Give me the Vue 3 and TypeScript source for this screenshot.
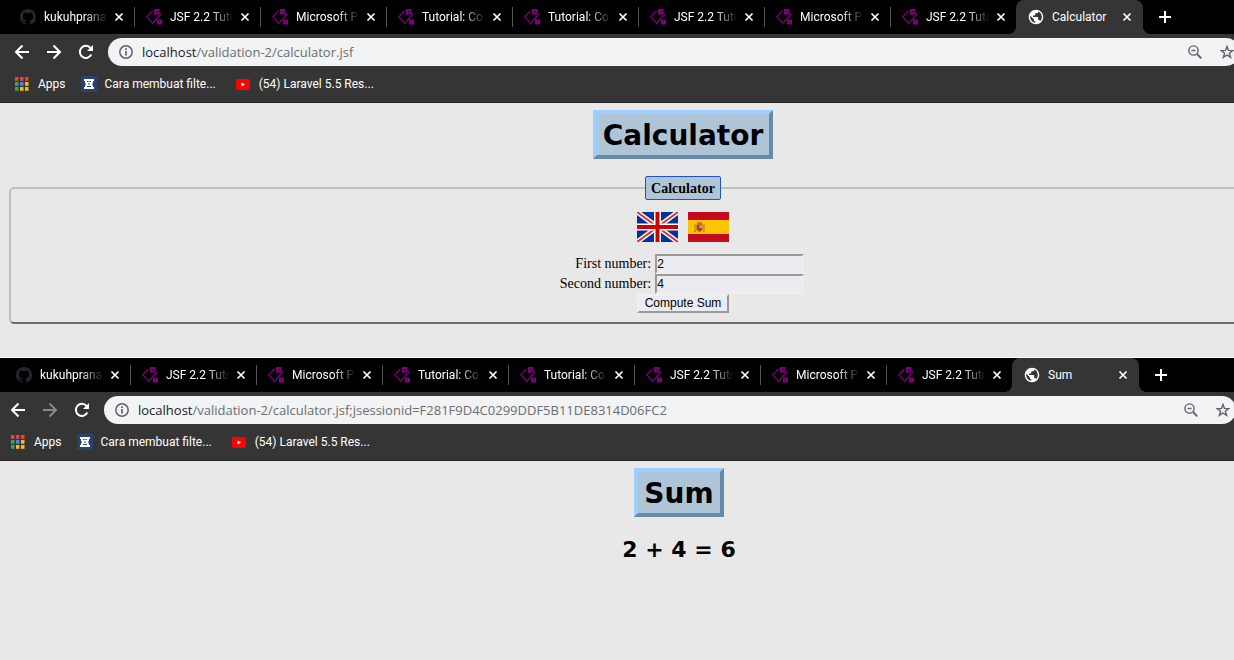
<script setup lang="ts">
interface Tab { title: string; icon: 'github' | 'code' | 'globe'; active?: boolean }
interface BrowserWindow { id: string; name: string; rest: string; forward: boolean; tabs: Tab[] }

const openTabs: Tab[] = [
  { title: 'kukuhprana', icon: 'github' },
  { title: 'JSF 2.2 Tuto', icon: 'code' },
  { title: 'Microsoft P', icon: 'code' },
  { title: 'Tutorial: Co', icon: 'code' },
  { title: 'Tutorial: Co', icon: 'code' },
  { title: 'JSF 2.2 Tuto', icon: 'code' },
  { title: 'Microsoft P', icon: 'code' },
  { title: 'JSF 2.2 Tuto', icon: 'code' },
]

const windows: BrowserWindow[] = [
  {
    id: 'calculator', name: 'Calculator', rest: '/validation-2/calculator.jsf', forward: true,
    tabs: [...openTabs, { title: 'Calculator', icon: 'globe', active: true }],
  },
  {
    id: 'sum', name: 'Sum', rest: '/validation-2/calculator.jsf;jsessionid=F281F9D4C0299DDF5B11DE8314D06FC2', forward: false,
    tabs: [...openTabs, { title: 'Sum', icon: 'globe', active: true }],
  },
]

const appColors = ['#ea4335', '#ea4335', '#ea4335', '#34a853', '#4285f4', '#fbbc05', '#34a853', '#fbbc05', '#fbbc05']
</script>

<template>
  <div class="stack">
    <section v-for="w in windows" :key="w.id" class="window" :class="w.id">
      <div class="tabs">
        <div v-for="(t, i) in w.tabs" :key="i" class="tab" :class="{ active: t.active }">
          <svg v-if="t.icon === 'github'" class="fav" viewBox="0 0 16 16" fill="#24292e">
            <path d="M8 0C3.58 0 0 3.58 0 8c0 3.54 2.29 6.53 5.47 7.59.4.07.55-.17.55-.38v-1.49c-2.01.37-2.53-.49-2.69-.94-.09-.23-.48-.94-.82-1.13-.28-.15-.68-.52-.01-.53.63-.01 1.08.58 1.23.82.72 1.21 1.87.87 2.33.66.07-.52.28-.87.51-1.07-1.78-.2-3.64-.89-3.64-3.95 0-.87.31-1.59.82-2.15-.08-.2-.36-1.02.08-2.12 0 0 .67-.21 2.2.82a7.4 7.4 0 0 1 4 0c1.53-1.04 2.2-.82 2.2-.82.44 1.1.16 1.92.08 2.12.51.56.82 1.27.82 2.15 0 3.07-1.87 3.75-3.65 3.95.29.25.54.73.54 1.48v2.2c0 .21.15.46.55.38A8 8 0 0 0 16 8c0-4.42-3.58-8-8-8z" />
          </svg>
          <svg v-else-if="t.icon === 'code'" class="fav" viewBox="0 0 16 16" fill="none" stroke="#800080">
            <path d="M6.500 2L.8 7.800 6 13.500M15.500 4.500L6 15" stroke-width="1.200" />
            <path d="M9 1h3.500v3.500H9zM12 11.500h3v3h-3z" stroke-width="2" />
          </svg>
          <svg v-else class="fav" viewBox="1 1 22 22">
            <path fill="#fff" d="M12 2C6.480 2 2 6.480 2 12s4.480 10 10 10 10-4.480 10-10S17.520 2 12 2zm-1 17.930c-3.950-.49-7-3.850-7-7.930 0-.62.08-1.210.21-1.790L9 15v1c0 1.100.9 2 2 2v1.930zm6.900-2.540c-.26-.81-1-1.390-1.900-1.390h-1v-3c0-.55-.45-1-1-1H8v-2h2c.55 0 1-.45 1-1V7h2c1.100 0 2-.9 2-2v-.41c2.930 1.190 5 4.060 5 7.410 0 2.080-.8 3.970-2.100 5.390z" />
          </svg>
          <span class="title">{{ t.title }}</span>
          <button class="close" aria-label="Close tab">
            <svg viewBox="0 0 10 10"><path d="M1.500 1.500l7 7M8.500 1.500l-7 7" stroke="#fff" stroke-width="1.700" /></svg>
          </button>
        </div>
        <button class="plus" aria-label="New tab">
          <svg viewBox="0 0 12 12"><path d="M6 0v12M0 6h12" stroke="#fff" stroke-width="2" /></svg>
        </button>
      </div>

      <div class="toolbar">
        <button class="nav" aria-label="Back">
          <svg viewBox="0 0 16 16"><path d="M15 8H2M8.500 1.500L2 8l6.500 6.500" /></svg>
        </button>
        <button class="nav" :class="{ dim: !w.forward }" aria-label="Forward">
          <svg viewBox="0 0 16 16"><path d="M1 8h13M7.500 1.500L14 8l-6.500 6.500" /></svg>
        </button>
        <button class="nav" aria-label="Reload">
          <svg viewBox="0 0 16 16"><path d="M13.300 10.500A6 6 0 1 1 12.500 4" /><path class="solid" d="M15 1v6H9z" /></svg>
        </button>
        <div class="address">
          <svg class="info" viewBox="0 0 14 14"><circle cx="7" cy="7" r="6.200" fill="none" stroke="#5f6368" stroke-width="1.500" /><path d="M7 6v4.500M7 3.300v1.700" stroke="#5f6368" stroke-width="1.700" /></svg>
          <span class="url"><b>localhost</b>{{ w.rest }}</span>
          <svg class="lens" viewBox="0 0 14 14" fill="none" stroke="#5f6368" stroke-width="1.400"><circle cx="5.500" cy="5.500" r="4.600" /><path d="M9 9l4.300 4.300" stroke-width="1.800" /><path d="M3.500 5.500h4" /></svg>
          <svg class="star" viewBox="0 0 14 14" fill="none" stroke="#5f6368" stroke-width="1.400"><path d="M7 1.500l1.500 3.900 4.200.2-3.300 2.600 1.200 4.100L7 10l-3.600 2.300 1.200-4.100L1.300 5.600l4.200-.2z" /></svg>
        </div>
      </div>

      <nav class="bookmarks">
        <a href="#" class="bookmark">
          <svg class="apps" viewBox="0 0 14 14">
            <rect v-for="(c, i) in appColors" :key="i" :x="(i % 3) * 5" :y="Math.floor(i / 3) * 5" width="3.500" height="3.800" :fill="c" />
          </svg>Apps
        </a>
        <a href="#" class="bookmark filter">
          <svg class="book" viewBox="0 0 16 16"><path fill="#2b4170" d="M0 0h16v16H0z" /><path fill="#fff" d="M3 3h10v2h-1v2l-1 1 1 2v1h1v2H3v-2h1v-1l1-2-1-1V5H3z" /><path d="M6 5.500h1.500M8.500 5.500H10M6 10.500h4M7 8h2" stroke="#2b4170" /></svg>Cara membuat filte...
        </a>
        <a href="#" class="bookmark video">
          <svg class="tube" viewBox="0 0 14 11"><rect width="14" height="11" rx="2" fill="#f00" /><path d="M5.500 3.500v4L9 5.500z" fill="#fff" /></svg>(54) Laravel 5.5 Res...
        </a>
      </nav>

      <main class="page">
        <h1>{{ w.name }}</h1>
        <form v-if="w.id === 'calculator'" @submit.prevent>
          <fieldset>
            <legend>Calculator</legend>
            <div class="flags">
              <a href="#" aria-label="English">
                <svg viewBox="0 0 41 30">
                  <path fill="#039" d="M0 0h41v30H0z" />
                  <path d="M0 0l41 30M41 0L0 30" stroke="#fff" stroke-width="5" />
                  <path d="M0 0l41 30M41 0L0 30" stroke="#d33" stroke-width="2" />
                  <path d="M20.500 0v30M0 15h41" stroke="#fff" stroke-width="7" />
                  <path d="M20.500 0v30M0 15h41" stroke="#c00" stroke-width="4" />
                </svg>
              </a>
              <a href="#" aria-label="Español">
                <svg viewBox="0 0 41 30">
                  <path fill="#c60b1e" d="M0 0h41v30H0z" /><path fill="#ffc400" d="M0 8h41v14H0z" />
                  <path fill="#b5762a" d="M9.500 10h4l1 3h-6zM6.500 12h1v8h-1zM15.500 12h1v8h-1zM6 19h2v1H6zM15 19h2v1h-2z" />
                  <path fill="#a8452f" d="M8.500 13h6v5l-3 2-3-2z" /><path fill="#c9a59b" d="M11.500 13.500h2.500V16h-2.500z" />
                </svg>
              </a>
            </div>
            <div class="fields">
              <label for="first">First number:</label><input id="first" type="text" value="2">
              <label for="second">Second number:</label><input id="second" type="text" value="4">
            </div>
            <button class="compute" type="submit">Compute Sum</button>
          </fieldset>
        </form>
        <h2 v-else>2 + 4 = 6</h2>
      </main>
    </section>
  </div>
</template>

<style>
body { margin: 0; background: #e8e8e8; }
</style>

<style scoped>
.stack { overflow: hidden; background: #e8e8e8; min-height: 100vh; }
.window { width: calc(100% + 132px); }
.window.calculator { border-bottom: 1px solid #fff; }
.window.sum { margin-left: -4px; }
button { border: 0; padding: 0; background: none; }
svg { display: block; flex: none; }
.tabs { display: flex; height: 34px; padding-left: 8px; background: #000; font: 12px/16px Roboto, sans-serif; color: #fff; }
.tab { box-sizing: border-box; width: 126px; display: flex; align-items: center; padding: 0 10px 0 12px; position: relative; }
.tab::after { content: ""; position: absolute; right: -1px; top: 7px; height: 20px; width: 1px; background: #555; }
.tab:nth-child(8)::after { display: none; }
.tab.active { background: #353535; border-radius: 8px 8px 0 0; width: 127px; padding-right: 11px; }
.tab.active::before, .tab.active::after { content: ""; display: block; position: absolute; top: auto; bottom: 0; width: 8px; height: 8px; }
.tab.active::before { left: -8px; background: radial-gradient(circle at 0 0, transparent 8px, #353535 8px); }
.tab.active::after { right: -8px; background: radial-gradient(circle at 100% 0, transparent 8px, #353535 8px); }
.fav { width: 16px; height: 16px; }
.title { flex: 1; margin-left: 8px; margin-right: 3px; white-space: nowrap; }
.tab:not(.active) .title { mask-image: linear-gradient(to right, #000 60%, transparent 95%); }
.close svg { width: 10px; height: 10px; }
.plus { margin-left: 16px; }
.plus svg { width: 12px; height: 12px; }
.toolbar { display: flex; align-items: center; gap: 16px; height: 36px; padding: 0 126px 0 14px; background: #353535; }
.nav svg { width: 16px; height: 16px; fill: none; stroke: #fff; stroke-width: 2; }
.nav .solid { fill: #fff; stroke: none; }
.nav.dim svg { stroke: #888; }
.address { flex: 1; display: flex; align-items: center; height: 28px; margin-left: -2px; padding: 0 6px 0 11px; border-radius: 14px; background: #f1f3f4; font: 13px/20px "Open Sans", sans-serif; color: #6a6e72; }
.address b { font-weight: 400; color: #202124; }
.info { width: 14px; height: 14px; margin-right: 9px; }
.url { flex: 1; white-space: nowrap; }
.lens, .star { width: 14px; height: 14px; }
.star { margin-left: 18px; }
.bookmarks { display: flex; box-sizing: border-box; height: 33px; padding: 0 0 4px 15px; background: #353535; border-bottom: 1px solid #222; font: 12px/16px Roboto, sans-serif; }
.bookmark { display: flex; align-items: center; color: #fff; text-decoration: none; white-space: nowrap; }
.apps { width: 14px; height: 14px; margin-right: 9px; }
.filter { margin-left: 15px; }
.book { width: 16px; height: 16px; margin-right: 8px; }
.video { margin-left: 20px; }
.tube { width: 14px; height: 11px; margin-right: 9px; }
.page { padding: 7px 9px 0; text-align: center; color: #000; }
.calculator .page { padding-bottom: 33px; }
h1 { box-sizing: border-box; width: max-content; height: 49px; margin: 0 auto; padding: 1px 6px 0; border: 4px solid; border-color: #9cceff #668baa #668baa #9cceff; background: #b0c4d8; font: bold 28px/42px "DejaVu Sans", sans-serif; }
h2 { margin: 19px 0 0; font: bold 22px/28px "DejaVu Sans", sans-serif; }
form { margin-top: 17px; }
fieldset { margin: 0; min-width: 0; padding: 12px 10px 9px; border: 2px solid; border-color: #bfbfbf #bfbfbf #6b6b6b #bfbfbf; border-radius: 5px; font: 14px/18px "Liberation Serif", serif; }
legend { box-sizing: border-box; height: 24px; margin: 0 auto; padding: 1px 5px 0; border: 1px solid #1b56c4; border-radius: 2px; background: #b0c4d8; font-weight: bold; line-height: 22px; }
.flags { display: flex; justify-content: center; gap: 10px; }
.flags svg { width: 41px; height: 30px; }
.fields { display: grid; grid-template-columns: max-content 149px; justify-content: center; align-items: center; column-gap: 4px; margin-top: 12px; padding-right: 2px; }
.fields label { text-align: right; }
.fields input { box-sizing: border-box; width: 100%; height: 20px; padding: 0; border: 2px solid; border-color: #999 #eee #eee #999; background: #ebecf2; font: 12px/16px "Liberation Sans", sans-serif; }
.compute { display: block; box-sizing: border-box; height: 19px; margin: 0 auto; padding: 0 6px; border: 2px solid; border-color: #f0f0f0 #999 #999 #f0f0f0; background: #ebecf2; font: 12px/15px "Liberation Sans", sans-serif; color: #000; }
</style>
